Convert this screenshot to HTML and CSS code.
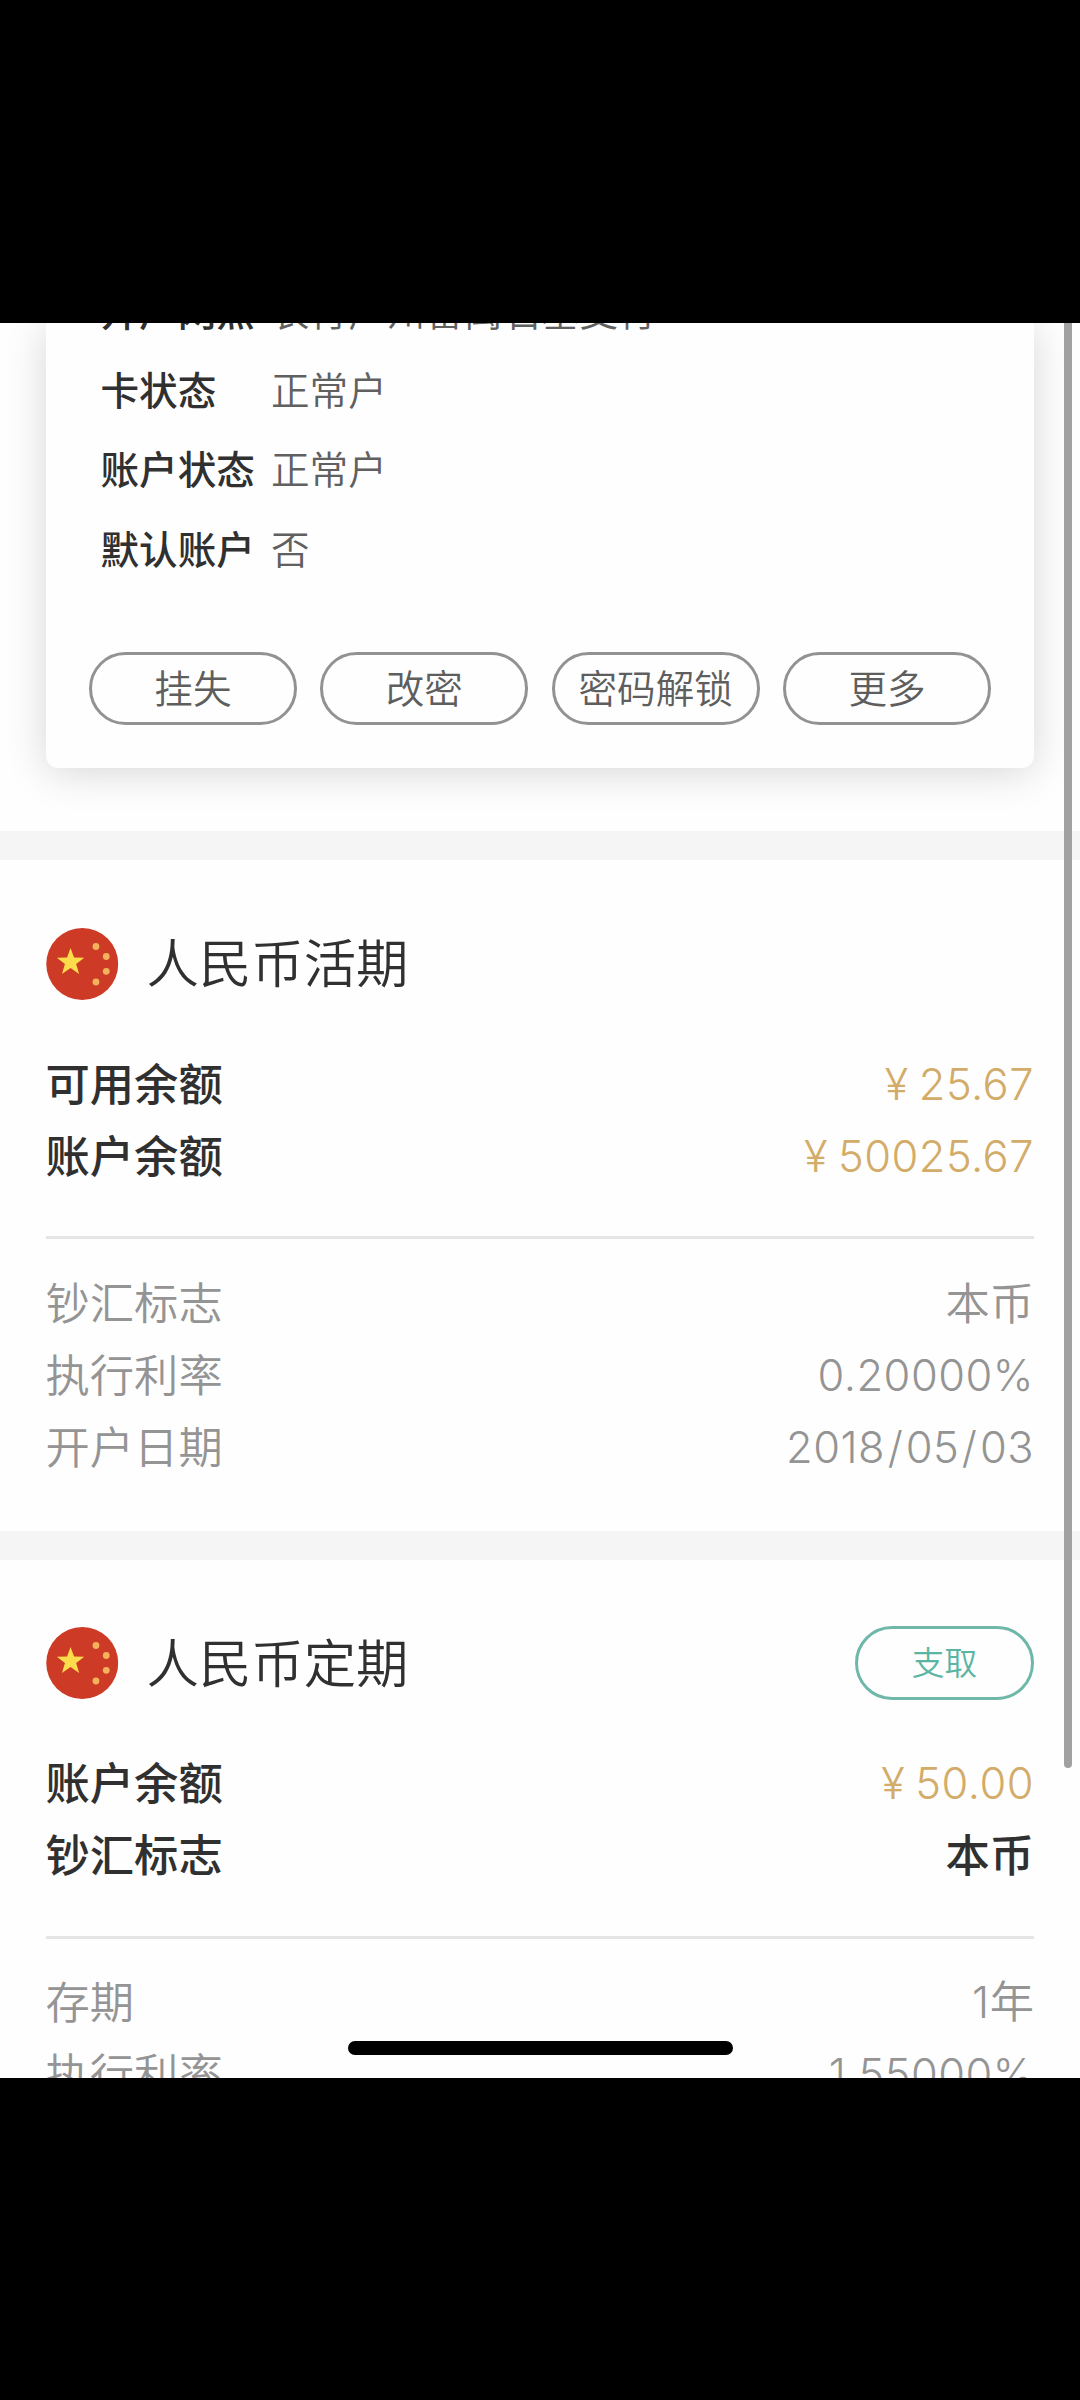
FILE: index.html
```html
<!DOCTYPE html>
<html lang="zh-CN">
<head>
<meta charset="utf-8">
<title>账户详情</title>
<link rel="stylesheet" href="styles.css">
</head>
<body>
<svg class="defs" width="0" height="0">
  <symbol id="flag-cn" viewBox="0 0 72 72">
    <circle cx="36" cy="36" r="36" fill="#cd3a25"/>
    <polygon fill="#fcdc4a" points="24.3,20 27.8,29.6 38,29.8 29.9,36 32.9,45.9 24.3,40 15.7,45.9 18.7,36 10.6,29.8 20.8,29.6"/>
    <g fill="#f3b25c">
      <circle cx="49.7" cy="18.5" r="3.4"/>
      <circle cx="60" cy="28.5" r="3.4"/>
      <circle cx="60" cy="43.3" r="3.4"/>
      <circle cx="49.7" cy="54" r="3.4"/>
    </g>
  </symbol>
</svg>
<div class="screen">
  <section class="card-area">
    <div class="card">
      <dl class="info">
        <div class="info-row"><dt>开户网点</dt><dd>农行广州番禺石基支行</dd></div>
        <div class="info-row"><dt>卡状态</dt><dd>正常户</dd></div>
        <div class="info-row"><dt>账户状态</dt><dd>正常户</dd></div>
        <div class="info-row"><dt>默认账户</dt><dd>否</dd></div>
      </dl>
      <div class="actions">
        <button class="pill">挂失</button>
        <button class="pill">改密</button>
        <button class="pill">密码解锁</button>
        <button class="pill">更多</button>
      </div>
    </div>
  </section>

  <section class="account">
    <header class="account-head">
      <svg class="flag"><use href="#flag-cn"/></svg>
      <h2>人民币活期</h2>
    </header>
    <div class="rows strong">
      <div class="row"><span>可用余额</span><span class="num gold"><i class="yen">¥</i>25.67</span></div>
      <div class="row"><span>账户余额</span><span class="num gold"><i class="yen">¥</i>50025.67</span></div>
    </div>
    <hr class="divider">
    <div class="rows muted">
      <div class="row"><span>钞汇标志</span><span>本币</span></div>
      <div class="row"><span>执行利率</span><span class="num">0.20000%</span></div>
      <div class="row"><span>开户日期</span><span class="num">2018<i class="slash">/</i>05<i class="slash">/</i>03</span></div>
    </div>
  </section>

  <section class="account">
    <header class="account-head">
      <svg class="flag"><use href="#flag-cn"/></svg>
      <h2>人民币定期</h2>
      <button class="withdraw">支取</button>
    </header>
    <div class="rows strong">
      <div class="row"><span>账户余额</span><span class="num gold"><i class="yen">¥</i>50.00</span></div>
      <div class="row"><span>钞汇标志</span><span>本币</span></div>
    </div>
    <hr class="divider">
    <div class="rows muted">
      <div class="row"><span>存期</span><span class="num">1<b class="unit">年</b></span></div>
      <div class="row"><span>执行利率</span><span class="num">1.55000%</span></div>
    </div>
  </section>

  <div class="scrollbar"></div>
  <div class="home-indicator"></div>
</div>
</body>
</html>
```
FILE: styles.css
```css
* { box-sizing: border-box; margin: 0; padding: 0; }

body {
  height: 2400px;
  padding-top: 323px;
  background: #000;
  font-family: "Noto Sans CJK SC", sans-serif;
  overflow: hidden;
}

.defs { display: block; height: 0; }

.screen {
  position: relative;
  height: 1755px;
  background: #fefefe;
  overflow: hidden;
}

.card-area {
  height: 508px;
  padding: 0 46px;
  overflow: hidden;
}

.card {
  height: 445px;
  padding: 0 43px;
  border-radius: 0 0 12px 12px;
  background: #fefefe;
  box-shadow: 0 4px 42px rgba(0, 0, 0, 0.16);
}

.info {
  display: flex;
  flex-direction: column;
  justify-content: flex-end;
  height: 328.5px;
  padding: 0 0 64.5px 11.5px;
}

.info-row {
  display: flex;
  flex: none;
  height: 79.3px;
  line-height: 79.3px;
  font-size: 38.6px;
  white-space: nowrap;
}

.info-row dt { width: 170.5px; font-weight: 500; color: #303030; }
.info-row dd { font-weight: 350; color: #606060; }

.actions { display: flex; gap: 23.5px; }

button {
  font-family: inherit;
  background: transparent;
}

.pill {
  flex: 1;
  height: 73px;
  padding-bottom: 4px;
  border: 3px solid #929292;
  border-radius: 37px;
  color: #5e5e5e;
  font-size: 38.6px;
  font-weight: 350;
  line-height: 63px;
  white-space: nowrap;
}

.account {
  box-sizing: content-box;
  height: 603px;
  padding: 67.5px 46px 0;
  border-top: 29px solid #f5f5f5;
}

.account-head {
  display: flex;
  align-items: center;
  height: 72px;
}

.flag { width: 72.5px; height: 72px; }

.account-head h2 {
  margin: -7px 0 0 28px;
  font-size: 52.4px;
  font-weight: 350;
  line-height: 72px;
  color: #303030;
}

.withdraw {
  margin-left: auto;
  width: 179px;
  height: 74px;
  padding-bottom: 5px;
  border: 3px solid #6fb8a9;
  border-radius: 37px;
  color: #5bb5a3;
  font-size: 32.7px;
  font-weight: 350;
  line-height: 63px;
}

.rows { margin-left: -0.5px; font-size: 44.3px; }
.strong { margin-top: 46px; font-weight: 500; color: #303030; }
.muted { font-weight: 350; color: #949494; }

.row {
  display: flex;
  justify-content: space-between;
  height: 72px;
  line-height: 73px;
}

.num {
  font-family: Inter, "Noto Sans CJK SC", sans-serif;
  font-size: 43.4px;
  font-weight: 330;
  line-height: 77px;
  letter-spacing: 0.5px;
}

.gold { color: #d2ac68; }
.yen { font-style: normal; margin-right: 10px; }
.slash { font-style: normal; margin: 0 2.5px; }
.unit { font-weight: 350; font-size: 44.3px; letter-spacing: 0; }

.divider {
  height: 3px;
  margin: 46.5px 0 25.5px;
  border: 0;
  background: #e5e5e5;
}

.scrollbar {
  position: absolute;
  top: -10px;
  left: 1063.5px;
  width: 8px;
  height: 1455px;
  border-radius: 4px;
  background: #a1a1a1;
}

.home-indicator {
  position: absolute;
  left: 348px;
  top: 1718px;
  width: 385px;
  height: 14px;
  border-radius: 7px;
  background: #000;
}
```
